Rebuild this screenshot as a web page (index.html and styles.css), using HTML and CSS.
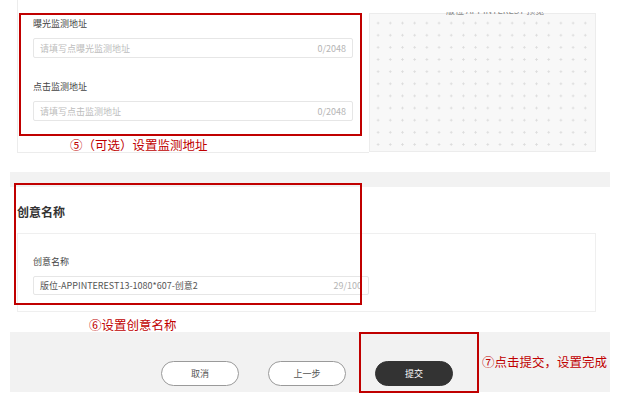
FILE: index.html
```html
<!DOCTYPE html>
<html lang="zh-CN">
<head>
<meta charset="utf-8">
<title>创意设置</title>
<link rel="stylesheet" href="styles.css">
</head>
<body>
<div class="page">
  <section class="top">
    <div class="form-card">
      <div class="field-label">曝光监测地址</div>
      <div class="input">
        <span class="placeholder">请填写点曝光监测地址</span>
        <span class="counter">0/2048</span>
      </div>
      <div class="field-label second">点击监测地址</div>
      <div class="input">
        <span class="placeholder">请填写点击监测地址</span>
        <span class="counter">0/2048</span>
      </div>
    </div>
    <div class="preview">
      <div class="preview-title"><span>版位 APPINTEREST 预览</span></div>
    </div>
  </section>

  <div class="band"></div>

  <section class="name-section">
    <h2 class="section-title">创意名称</h2>
    <div class="name-card">
      <div class="field-label">创意名称</div>
      <div class="input name-input">
        <span class="value">版位-APPINTEREST13-1080*607-创意2</span>
        <span class="counter">29/100</span>
      </div>
    </div>
  </section>

  <footer class="footer">
    <button class="btn">取消</button>
    <button class="btn">上一步</button>
    <button class="btn primary">提交</button>
  </footer>

  <div class="mark mark-1"></div>
  <div class="mark mark-2"></div>
  <div class="mark mark-3"></div>
  <div class="note note-1">⑤（可选）设置监测地址</div>
  <div class="note note-2">⑥设置创意名称</div>
  <div class="note note-3">⑦点击提交，设置完成</div>
</div>
</body>
</html>
```

FILE: styles.css
```css
html, body {
  margin: 0;
  padding: 0;
  background: #fff;
}

.page {
  position: relative;
  width: 621px;
  height: 405px;
  overflow: hidden;
  font-family: "Noto Sans CJK SC", "Noto Sans", sans-serif;
  color: #333;
}

.top {
  display: flex;
  margin-left: 17px;
  height: 153px;
}

.form-card {
  width: 352px;
  box-sizing: border-box;
  border-left: 1px solid #ececec;
  border-bottom: 1px solid #ececec;
  padding: 18px 0 0 15px;
}

.field-label {
  font-size: 9px;
  line-height: 12px;
  color: #444;
  margin-bottom: 8px;
}

.field-label.second {
  margin-top: 23px;
}

.input {
  display: flex;
  align-items: center;
  justify-content: space-between;
  box-sizing: border-box;
  width: 320px;
  height: 20px;
  border: 1px solid #e6e6e6;
  border-radius: 2px;
  padding: 0 6px;
  font-size: 9px;
  background: #fff;
}

.placeholder {
  color: #bdbdbd;
}

.counter {
  color: #b5b5b5;
}

.value {
  color: #555;
}

.preview {
  position: relative;
  width: 227px;
  height: 139px;
  margin-top: 13px;
  box-sizing: border-box;
  border: 1px solid #ececec;
  background-color: #f8f8f8;
  background-image: radial-gradient(circle, #dcdcdc 0.9px, transparent 1.2px);
  background-size: 12.2px 12.15px;
  background-position: 2px 3px;
}

.preview-title {
  position: absolute;
  top: -2px;
  left: 76px;
  height: 3px;
  overflow: hidden;
  font-size: 9px;
  line-height: 9px;
  color: #8a8a8a;
  white-space: nowrap;
}

.preview-title span {
  display: block;
  margin-top: -6px;
}

.band {
  margin: 19px 0 0 10px;
  width: 600px;
  height: 15px;
  background: #f2f2f2;
}

.name-section {
  margin-left: 17px;
  width: 579px;
}

.section-title {
  margin: 17px 0 13px 0;
  font-size: 12px;
  line-height: 16px;
  font-weight: 600;
  color: #333;
}

.name-card {
  box-sizing: border-box;
  height: 79px;
  border: 1px solid #efefef;
  padding: 22px 0 0 15px;
}

.name-input {
  width: 336px;
  height: 19px;
}

.footer {
  display: flex;
  gap: 29px;
  margin: 20px 0 0 10px;
  width: 600px;
  height: 60px;
  box-sizing: border-box;
  padding: 29px 0 0 151px;
  background: #f2f2f2;
}

.btn {
  width: 78px;
  height: 25px;
  box-sizing: border-box;
  border: 1px solid #9a9a9a;
  border-radius: 13px;
  background: #fff;
  color: #555;
  font-family: inherit;
  font-size: 9px;
  padding: 0;
}

.btn.primary {
  background: #333;
  border-color: #333;
  color: #fff;
}

.mark {
  position: absolute;
  box-sizing: border-box;
  border: 2px solid #c00000;
}

.mark-1 {
  left: 19px;
  top: 13px;
  width: 343px;
  height: 123px;
}

.mark-2 {
  left: 14px;
  top: 183px;
  width: 348px;
  height: 122px;
}

.mark-3 {
  left: 359px;
  top: 332px;
  width: 120px;
  height: 61px;
}

.note {
  position: absolute;
  font-size: 12.5px;
  line-height: 16px;
  color: #c00000;
  white-space: nowrap;
}

.note-1 {
  left: 70px;
  top: 137px;
}

.note-2 {
  left: 89px;
  top: 317px;
}

.note-3 {
  left: 482px;
  top: 354px;
}
```
